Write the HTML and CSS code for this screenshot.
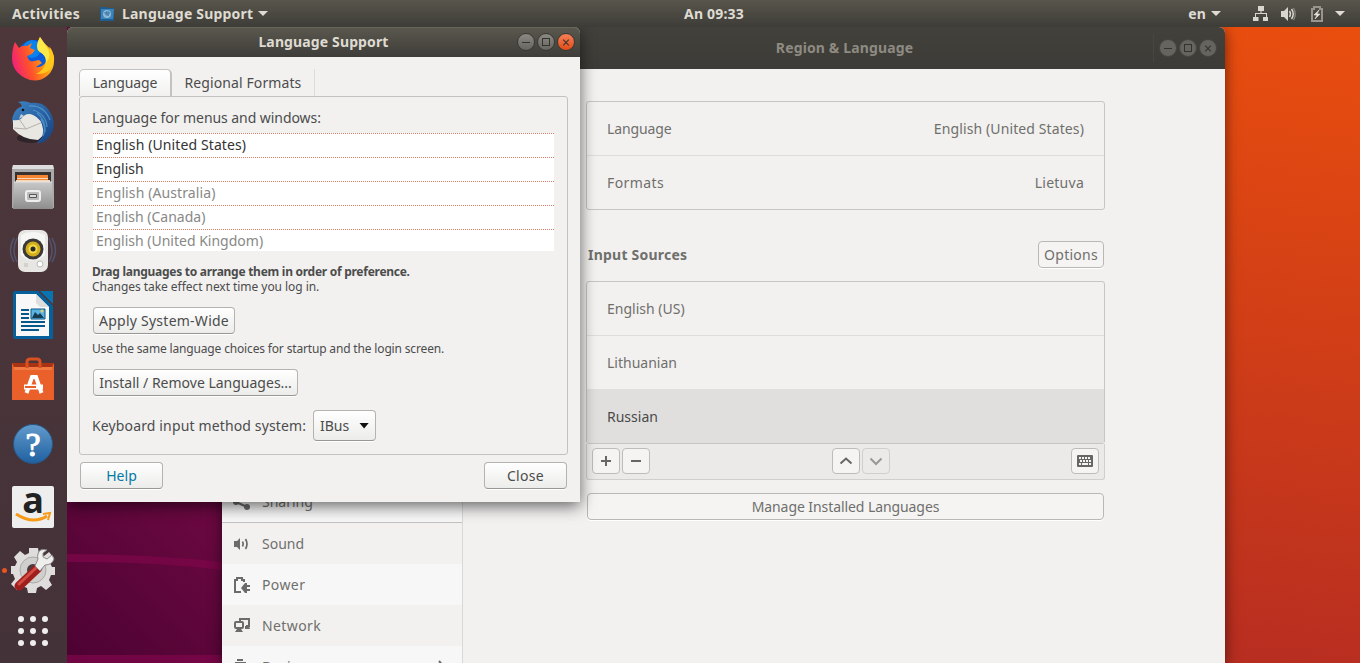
FILE: index.html
```html
<!DOCTYPE html>
<html lang="en">
<head>
<meta charset="utf-8">
<title>Language Support</title>
<link rel="stylesheet" href="styles.css">
</head>
<body>
<header class="topbar">
  <span class="activities">Activities</span>
  <svg class="app-icon" width="16" height="16" viewBox="0 0 16 16"><path d="M1 1h6l1 1h7v13H1z" fill="#1f5c91"/><path d="M2 3h13l-1 10H2z" fill="#3b83bb"/><circle cx="8" cy="8" r="4" fill="#8eb8d7"/><path d="M6 6q0 4 4 3M7 6h3v2H8z" stroke="#316f9f" fill="none"/></svg>
  <span class="app-name">Language Support</span><i class="caret"></i>
  <span class="clock">An 09:33</span>
  <span class="lang">en</span><i class="caret"></i>
  <svg class="net" width="16" height="16" viewBox="0 0 16 16" fill="#d8d6cf"><path d="M5 0h6v5H8.500v2H14v4h1v4h-5v-4h3V8H3v3h2.500v4H0v-4h2V7h5.500V5H5z"/></svg>
  <svg class="vol" width="16" height="16" viewBox="0 0 16 16"><path d="M1 5h3l4-4v14l-4-4H1z" fill="#d8d6cf"/><path d="M9.500 5q2 3 0 6M11.500 3q3.500 5 0 10" fill="none" stroke="#d8d6cf" stroke-width="1.500"/><path d="M13.500 2q3.500 6 0 12" fill="none" stroke="#85837c" stroke-width="1.400"/></svg>
  <svg class="bat" width="12" height="16" viewBox="0 0 12 16"><path d="M1 3h2V1h6v2h2v12H1z" fill="none" stroke="#97958e" stroke-width="2"/><path d="M8 4L3 9h3l-2 4 5-5H6z" fill="#e3e1da" stroke="#e3e1da" stroke-width=".6"/></svg>
  <i class="caret last"></i>
</header>
<main class="desktop">
  <svg class="wallpaper" viewBox="0 0 1360 636" width="1360" height="636">
    <defs>
      <linearGradient id="orange" x1="1" y1="0" x2=".75" y2="1"><stop offset="0" stop-color="#e94e0e"/><stop offset="1" stop-color="#b52c21"/></linearGradient>
      <linearGradient id="plum" gradientUnits="userSpaceOnUse" x1="67" y1="636" x2="222" y2="470"><stop offset="0" stop-color="#4c0232"/><stop offset="1" stop-color="#6d0942"/></linearGradient>
    </defs>
    <rect width="1360" height="636" fill="url(#orange)"/>
    <rect width="700" height="636" fill="url(#plum)"/>
    <path d="M67 527Q150 527 222 535v8Q150 534 67 535zM67 628h155v8H67z" fill="#7a0649" opacity=".8"/>
  </svg>

  <section class="window settings">
    <div class="titlebar"><span>Region &amp; Language</span>
      <div class="controls"><i class="ctl min"></i><i class="ctl max"></i><i class="ctl close"></i></div>
    </div>
    <div class="settings-body">
      <nav class="side">
        <div class="item shared"><svg width="18" height="18" viewBox="0 0 18 18" fill="#6b6b69"><circle cx="3" cy="9" r="3"/><circle cx="14" cy="3" r="3"/><circle cx="14" cy="14" r="3"/><path d="M3 9l11-6M3 9l11 5" stroke="#6b6b69" stroke-width="2"/></svg>Sharing</div>
        <div class="item"><svg width="18" height="18" viewBox="0 0 18 18"><path d="M1 6h3l3-3v12l-3-3H1z" fill="#6b6b69"/><path d="M9.500 6.500q1.500 2.500 0 5M12.500 4q3 5 0 10" fill="none" stroke="#6b6b69" stroke-width="1.700"/></svg>Sound</div>
        <div class="item alt wide"><svg width="18" height="18" viewBox="0 0 18 18"><path d="M8 16H2V4h2V2h5v2h2v2" fill="none" stroke="#6b6b69" stroke-width="2"/><path d="M8 12l4-5h2v2h3v2h-3v2h3v2h-3v2h-2z" fill="#6b6b69"/></svg>Power</div>
        <div class="item wide"><svg width="18" height="18" viewBox="0 0 18 18"><path d="M7 4V2h9v7h-3" fill="none" stroke="#6b6b69" stroke-width="2"/><rect x="2" y="5" width="8" height="6" rx="1" fill="none" stroke="#6b6b69" stroke-width="2"/><path d="M4 12h4l2 3H2zM12 9h4l1 3h-5z" fill="#6b6b69"/></svg>Network</div>
        <div class="item alt devices"><svg width="18" height="18" viewBox="0 0 18 18"><path d="M4 1h6v2H4zM2 4h11v10H2z" fill="#6b6b69"/></svg>Devices<svg class="chev" width="9" height="14" viewBox="0 0 9 14"><path d="M2 1l5 6-5 6" fill="none" stroke="#6b6b69" stroke-width="2"/></svg></div>
      </nav>
      <div class="panel">
        <div class="list">
          <div class="row"><span class="t-lang">Language</span><span class="t-us">English (United States)</span></div>
          <div class="row"><span class="t-formats">Formats</span><span class="t-lt">Lietuva</span></div>
        </div>
        <div class="heading"><b>Input Sources</b><button class="btn flat options">Options</button></div>
        <div class="list">
          <div class="row"><span>English (US)</span></div>
          <div class="row"><span>Lithuanian</span></div>
          <div class="row selected"><span>Russian</span></div>
        </div>
        <div class="tools">
          <button class="tool"><svg width="16" height="16" viewBox="0 0 16 16"><path d="M3 8h10M8 3v10"/></svg></button>
          <button class="tool"><svg width="16" height="16" viewBox="0 0 16 16"><path d="M3 8h10"/></svg></button>
          <span class="gap"></span>
          <button class="tool"><svg width="16" height="16" viewBox="0 0 16 16"><path d="M2.500 10.500L8 5.500l5.500 5"/></svg></button>
          <button class="tool off"><svg width="16" height="16" viewBox="0 0 16 16"><path d="M2.500 5.500L8 11l5.500-5.500"/></svg></button>
          <span class="gap right"></span>
          <button class="tool"><svg width="16" height="12" viewBox="0 0 16 12"><rect width="16" height="12" rx="1" fill="#666664"/><path class="keys" d="M2 3h12M3 6h11" stroke-dasharray="2 1"/><path class="keys" d="M2 9h2M5 9h6M12 9h2"/></svg></button>
        </div>
        <button class="btn flat manage">Manage Installed Languages</button>
      </div>
    </div>
  </section>

  <section class="window dialog">
    <div class="titlebar"><span>Language Support</span>
      <div class="controls"><i class="ctl min"></i><i class="ctl max"></i><i class="ctl close"></i></div>
    </div>
    <div class="dialog-body">
      <div class="tabs"><div class="tab active">Language</div><div class="tab formats">Regional Formats</div></div>
      <div class="notebook">
        <label class="menus">Language for menus and windows:</label>
        <ul class="langs">
          <li class="t-us">English (United States)</li><li>English</li><li class="dim t-au">English (Australia)</li><li class="dim">English (Canada)</li><li class="dim">English (United Kingdom)</li>
        </ul>
        <p class="small strong">Drag languages to arrange them in order of preference.</p>
        <p class="small changes">Changes take effect next time you log in.</p>
        <button class="btn apply">Apply System-Wide</button>
        <p class="small same">Use the same language choices for startup and the login screen.</p>
        <button class="btn install">Install / Remove Languages...</button>
        <div class="method"><span>Keyboard input method system:</span><button class="btn combo">IBus<i></i></button></div>
      </div>
      <div class="actions"><button class="btn help">Help</button><button class="btn close-btn">Close</button></div>
    </div>
  </section>

  <aside class="dock">
    <div class="slot"><svg width="48" height="48" viewBox="0 0 48 48">
      <defs><linearGradient id="ff" x1="0" y1=".6" x2="1" y2=".3"><stop offset="0" stop-color="#f0207a"/><stop offset=".35" stop-color="#ff4f2d"/><stop offset=".7" stop-color="#ff9a12"/><stop offset="1" stop-color="#ffe02e"/></linearGradient></defs>
      <circle cx="25" cy="22" r="17" fill="#0a5cdc"/><circle cx="23" cy="14" r="9" fill="#0893f5" opacity=".7"/>
      <path d="M6 7l4 6q3-3 8-2l5-3-2 5 5 2-3 4-5 2q2 7 7 5l5-1 3 3-6 4q6 1 10-5 3-7-4-13-5-5-2-11l4 5q8 7 10 14 1 13-7 19-10 8-22 2Q3 36 3 23 3 14 6 7z" fill="url(#ff)"/>
      <path d="M31 2q-6 11 0 15 9 5 4 15-3 5-8 7 16 1 18-15 0-7-5-13l1 3Q35 9 31 2z" fill="#ffc61b"/><path d="M31 2q-6 11 0 15 7 4 6 11 7-8 0-17z" fill="#ffe94a"/></svg></div>
    <div class="slot"><svg width="48" height="48" viewBox="0 0 48 48">
      <defs><linearGradient id="bird" x1="0" y1="0" x2="1" y2="1"><stop offset="0" stop-color="#3f86c6"/><stop offset="1" stop-color="#143f80"/></linearGradient></defs>
      <ellipse cx="22" cy="39" rx="14" ry="5" fill="#2e2429"/>
      <path d="M4 21Q8 13 20 13l15 5 3 15-9 8Q14 41 4 30z" fill="#e9e7e2"/><path d="M8 17l9 13 17-7M17 30L5 29" fill="none" stroke="#b5b2ad"/>
      <path d="M3 29Q1 12 13 7q-1-3-4-4 7-2 13 1 15-2 21 13 6 15-8 26-4 1-8 1 8-5 7-14-1-10-10-14-7-3-12 4-4 2-8 1-2 5-1 8z" fill="url(#bird)"/>
      <path d="M20 7q15-1 21 14M24 11q13 4 14 17M28 14q9 7 8 19M32 20q6 9 2 17" fill="none" stroke="#5ca1d8" stroke-width="1.300" opacity=".7"/><path d="M12 15l-2 5 5-3z" fill="#c9ced3"/><circle cx="14" cy="11" r="1.300" fill="#111"/></svg></div>
    <div class="slot"><svg width="48" height="48" viewBox="0 0 48 48">
      <defs><linearGradient id="cab" x1="0" y1="0" x2="0" y2="1"><stop offset="0" stop-color="#c8c8c8"/><stop offset="1" stop-color="#8e8e8e"/></linearGradient></defs>
      <path d="M4 2h40l1 5v38H3V7z" fill="#aaa"/><path d="M4 2h40l1 4H3z" fill="#ddd"/><path d="M6 9h36v11H6z" fill="#383331"/><path d="M8 12h31v9H8z" fill="#f58433"/><path d="M8 15h31v1H8zM7 17h34v3H7z" fill="#f6d8ba"/><path d="M5 19h38l1 27H4z" fill="url(#cab)"/><path d="M5 19h38" stroke="#e5e5e5"/><rect x="17" y="28" width="14" height="10" rx="2" fill="#bbb" stroke="#eee" stroke-width="2"/><path d="M20.500 31.500h7v3h-7z" fill="#ddd" stroke="#555"/></svg></div>
    <div class="slot"><svg width="48" height="48" viewBox="0 0 48 48">
      <g fill="none" stroke="#56698e" stroke-width="1.500" opacity=".6"><path d="M5 11q-7 12 0 24M8 11q-6 13 0 24M43 11q7 12 0 24M40 11q6 13 0 24"/></g><rect x="9" y="3" width="30" height="42" rx="7" fill="#e7e6e3"/><path d="M12 8q12-6 24 0v20q-12 11-24 0z" fill="#f6f6f4"/><circle cx="24" cy="22" r="10.500" fill="#3b3937"/><circle cx="24" cy="22" r="7.500" fill="#d2ae1e"/><circle cx="24" cy="22" r="4.500" fill="#f5db48"/><circle cx="24" cy="22" r="2.500" fill="#292929"/><circle cx="31" cy="37" r="3" fill="#fff" stroke="#bbb"/><path d="M15 36h4v4h-4z" fill="#d3d1ce"/></svg></div>
    <div class="slot"><svg width="48" height="48" viewBox="0 0 48 48">
      <path d="M6 0h24l14 14v34H7q-3 0-3-3V3q0-3 2-3z" fill="#05609b"/><path d="M30 0h14v14z" fill="#0874b2"/><path d="M30 0l14 14" stroke="#4d373b" stroke-width="1.500"/><path d="M7 3h20l13 13v29H7z" fill="#f8f8f8"/><path d="M27 3v9l4 4h9z" fill="#ddd"/><path d="M12 19h8M12 23h8M12 27h8M12 31h24M12 35h24M12 39h18" stroke="#08588a" stroke-width="2"/><path d="M22 18h14v10H22z" fill="#5ab4e3" stroke="#08588a"/><path d="M23 27l3-6 3 3 2-2 4 5z" fill="#173c52"/><circle cx="33" cy="20" r="1.500" fill="#e9ce61"/></svg></div>
    <div class="slot"><svg width="48" height="48" viewBox="0 0 48 48">
      <path d="M3 8h42v37H3z" fill="#e9602b"/><path d="M3 8h42l-2 4H5z" fill="#a93413"/><path d="M5 12h38v3H5z" fill="#f27b43"/><path d="M18 13V7q0-3 3-3h7q3 0 3 3v6" fill="none" stroke="#d95021" stroke-width="3"/><path d="M17.500 38L23 22h4l5.500 16" fill="none" stroke="#fff" stroke-width="4"/><path d="M15 32h19" stroke="#fff" stroke-width="5"/><path d="M16 32h11" stroke="#e9602b" stroke-width="2"/></svg></div>
    <div class="slot help-slot"><svg width="48" height="48" viewBox="0 0 48 48">
      <defs><linearGradient id="helpg" x1="0" y1="0" x2="0" y2="1"><stop offset="0" stop-color="#629bcc"/><stop offset="1" stop-color="#1f60a0"/></linearGradient></defs><circle cx="24" cy="24" r="19.500" fill="url(#helpg)" stroke="#285683"/><text x="24" y="36" text-anchor="middle" class="q">?</text></svg></div>
    <div class="slot"><svg width="48" height="48" viewBox="0 0 48 48"><rect x="3" y="3" width="42" height="42" rx="2" fill="#eee"/><text x="24" y="30" text-anchor="middle" class="amazon">a</text><path d="M7 31q17 11 31 2" fill="none" stroke="#f79a18" stroke-width="3"/><path d="M34 31l7-1-2 7" fill="none" stroke="#f79a18" stroke-width="2"/></svg></div>
    <div class="slot running"><svg width="48" height="48" viewBox="0 0 48 48">
      <path d="M20 2h9l1 6 5 2 5-4 5 6-4 5 2 4h3v8h-4l-2 5 3 5-6 5-5-4-4 2-1 5h-8l-1-5-5-2-5 4-6-6 4-5-2-5H2v-8h4l2-4-3-5 6-6 5 4 4-2z" fill="#dedddc"/><circle cx="24" cy="24" r="13" fill="#d0cfcd" stroke="#aaa"/><circle cx="24" cy="24" r="6" fill="#4a3b3e"/><path d="M10 40l19-18" stroke="#9f1f1d" stroke-width="9" stroke-linecap="round"/><path d="M10 38l18-17" stroke="#d34b43" stroke-width="3" stroke-linecap="round"/><path d="M26 20l5 5 5-6q7 0 9-6l-2-4-5 4-4-2v-4l4-3q-8-2-9 4-1 2 0 5z" fill="#eeeeec" stroke="#8c8b89"/></svg></div>
    <div class="apps"><i></i><i></i><i></i><i></i><i></i><i></i><i></i><i></i><i></i></div>
  </aside>
</main>
</body>
</html>
```
FILE: styles.css
```css
*, *::before, *::after { box-sizing: border-box; }
body { margin: 0; width: 1360px; height: 663px; overflow: hidden; font: 14px/20px "Noto Sans", "Open Sans", sans-serif; color: #4c4c4c; }
button { font: inherit; color: inherit; margin: 0; padding: 0; white-space: nowrap; letter-spacing: inherit; }
p, ul { margin: 0; padding: 0; list-style: none; }
span, p, label, li { white-space: nowrap; }

.topbar { position: relative; display: flex; align-items: center; height: 27px; padding-left: 12px; background: linear-gradient(#58564c, #3d3c37); color: #dfdbd2; font-weight: 700; letter-spacing: .2px; }
.activities { width: 87px; letter-spacing: .3px; }
.app-name { margin-left: 7px; width: 131px; }
.caret { width: 10px; height: 5px; margin-left: 5px; background: #dfdbd2; clip-path: polygon(0 0, 100% 0, 50% 100%); }
.clock { position: absolute; left: 684px; }
.lang { margin-left: auto; }
.net { margin-left: 32px; }
.vol { margin-left: 11px; }
.bat { margin-left: 15px; }
.caret.last { margin: 0 15px 0 12px; }

.desktop { position: relative; height: 636px; overflow: hidden; }
.wallpaper { display: block; }
.window { position: absolute; background: #f2f1f0; }
.titlebar { display: flex; position: relative; align-items: center; justify-content: center; border-radius: 6px 6px 0 0; font-weight: 700; letter-spacing: .13px; }
.controls { position: absolute; right: 5px; display: flex; gap: 2px; }
.ctl { position: relative; width: 18px; height: 18px; border: 1px solid #393833; border-radius: 50%; background: linear-gradient(#8a8982, #66655f); }
.min::before { content: ""; position: absolute; left: 4px; top: 8px; width: 8px; height: 1px; background: #34332f; }
.max::before { content: ""; position: absolute; left: 4px; top: 4px; width: 8px; height: 8px; border: 1px solid #34332f; }
.close::before, .close::after { content: ""; position: absolute; left: 4px; top: 7.5px; width: 8px; height: 1px; background: #34332f; transform: rotate(45deg); }
.close::after { transform: rotate(-45deg); }

.settings { left: 222px; top: 0; width: 1003px; height: 636px; border-radius: 6px 6px 0 0; box-shadow: 0 3px 14px rgba(0,0,0,.55); color: #6f6f6c; display: flex; flex-direction: column; }
.settings .titlebar { height: 42px; padding-left: 242px; background: linear-gradient(#42413b, #3c3b37); color: #8e8b82; }
.settings .controls { right: 8px; padding: 5px 0 5px 5px; border-left: 1px solid #47463f; }
.settings .ctl { border-color: #46453f; background: #65645d; }
.settings-body { display: flex; flex: 1; min-height: 0; overflow: hidden; }
.side { width: 241px; padding-top: 413px; border-right: 1px solid #d9d8d6; flex: none; overflow: hidden; }
.item { display: flex; align-items: center; height: 41px; padding-left: 11px; gap: 11px; }
.item.wide { letter-spacing: .4px; }
.item svg { flex: none; }
.alt, .shared { background: #f7f7f7; }
.shared { border-bottom: 1px solid #c3c2c0; }
.devices .chev { margin-left: auto; margin-right: 16px; }
.panel { width: 519px; margin: 32px 0 0 123px; flex: none; }
.list { border: 1px solid #c6c5c3; border-radius: 3px; }
.row { display: flex; justify-content: space-between; align-items: center; height: 53px; padding: 0 20px; }
.row + .row { height: 54px; border-top: 1px solid #dedddb; }
.row.selected { background: #e0dfde; border-color: #e0dfde; color: #4a4a49; }
.t-lang { letter-spacing: -.1px; }
.t-us, .t-au { letter-spacing: .11px; }
.t-formats { letter-spacing: .4px; }
.t-lt { letter-spacing: .25px; }
.heading { display: flex; justify-content: space-between; align-items: flex-start; height: 71px; padding: 31px 1px 0 2px; }
.heading b { line-height: 28px; letter-spacing: .23px; }
.btn { border: 1px solid #b4b3b0; border-bottom-color: #989794; border-radius: 4px; background: linear-gradient(#fff, #ececea); height: 27px; box-shadow: 0 1px 0 #fff; display: flex; align-items: center; justify-content: center; }
.btn.flat { background: #f5f4f3; border-color: #b9b8b5; }
.options { width: 66px; letter-spacing: .25px; }
.tools { display: flex; align-items: center; height: 36px; padding: 0 5px 1px; background: #ebeae9; border: 1px solid #d0cfcd; border-top: 0; border-radius: 0 0 3px 3px; }
.tool { width: 28px; height: 26px; border: 1px solid #bdbcb9; border-radius: 4px; background: #f5f4f3; display: flex; align-items: center; justify-content: center; margin-right: 2px; }
.tool svg { fill: none; stroke: #666664; stroke-width: 2; }
.tool rect { stroke: none; }
.tool .keys { stroke: #f5f4f3; }
.tool.off { background: #ebeae9; border-color: #d0cfcd; }
.tool.off svg { stroke: #999894; }
.tool:last-child { margin-right: 0; }
.gap { width: 180px; }
.gap.right { flex: 1; }
.manage { width: 517px; margin: 13px 0 0 1px; letter-spacing: -.08px; }

.dialog { left: 67px; top: 0; width: 513px; height: 475px; border-radius: 6px 6px 0 0; box-shadow: 0 4px 16px rgba(0,0,0,.6); }
.dialog .titlebar { height: 30px; background: linear-gradient(#5a584e, #3e3d38); box-shadow: inset 0 1px #68665b; color: #dfdbd2; }
.dialog .close { background: linear-gradient(#f58058, #e34c17); }
.dialog-body { padding: 12px 12px 0; }
.tabs { display: flex; height: 27px; }
.tab { height: 27px; padding-top: 4px; text-align: center; white-space: nowrap; }
.tab.active { width: 93px; border: 1px solid #c3c2c0; border-right-width: 2px; border-bottom: 0; border-radius: 5px 5px 0 0; background: linear-gradient(#fff, #f2f1f0); padding-top: 3px; letter-spacing: -.1px; }
.tab.formats { width: 143px; border-right: 1px solid #dddcda; letter-spacing: .1px; }
.notebook { width: 489px; height: 359px; border: 1px solid #c3c2c0; border-radius: 3px; padding: 11px 12px 0; display: flex; flex-direction: column; align-items: flex-start; }
.menus { height: 25px; letter-spacing: -.06px; }
.langs { width: 461px; margin-left: 1px; }
.langs li { height: 24px; padding: 1px 3px 0; line-height: 21px; color: #333; background: repeating-linear-gradient(90deg, #df806c 0 1px, #fff 1px 2px) 0 0 / 100% 1px no-repeat, #fff; }
.langs li:last-child { height: 22px; }
.langs li.dim { color: #888886; }
.small { font-size: 12px; line-height: 15px; }
.strong { margin-top: 13px; font-weight: 700; letter-spacing: -.27px; }
.changes { letter-spacing: -.05px; }
.apply { width: 142px; margin: 13px 0 0 1px; letter-spacing: .25px; }
.same { margin-top: 7px; letter-spacing: -.16px; }
.install { width: 205px; margin: 13px 0 0 1px; }
.method { display: flex; align-items: center; margin-top: 14px; }
.method span { width: 214px; letter-spacing: .14px; }
.combo { width: 63px; height: 31px; margin-left: 7px; gap: 10px; letter-spacing: 0; }
.combo i { width: 10px; height: 6px; background: #111; clip-path: polygon(0 0, 100% 0, 50% 100%); }
.actions { display: flex; justify-content: space-between; padding: 7px 1px 0; }
.actions .btn { width: 83px; }
.close-btn { letter-spacing: .3px; }
.help { color: #007aa6; }

.dock { position: absolute; left: 0; top: 0; width: 67px; height: 636px; background: linear-gradient(#4e373b, #433238); }
.slot { display: flex; align-items: center; justify-content: center; height: 64px; padding-right: 1px; }
.slot svg { display: block; }
.help-slot { padding-top: 1px; }
.running { position: relative; padding-bottom: 2px; }
.running::before { content: ""; position: absolute; left: 2px; top: 29px; width: 5px; height: 5px; border-radius: 50%; background: #e95420; }
.q { font: 34px "Liberation Serif", serif; fill: #fff; stroke: #fff; stroke-width: 1px; }
.amazon { font: 700 36px "Open Sans", sans-serif; fill: #222; }
.apps { display: grid; grid-template-columns: repeat(3, 6px); gap: 6px; justify-content: center; padding: 13px 1px 0 0; }
.apps i { width: 6px; height: 6px; border-radius: 50%; background: #f0eeec; }
```
